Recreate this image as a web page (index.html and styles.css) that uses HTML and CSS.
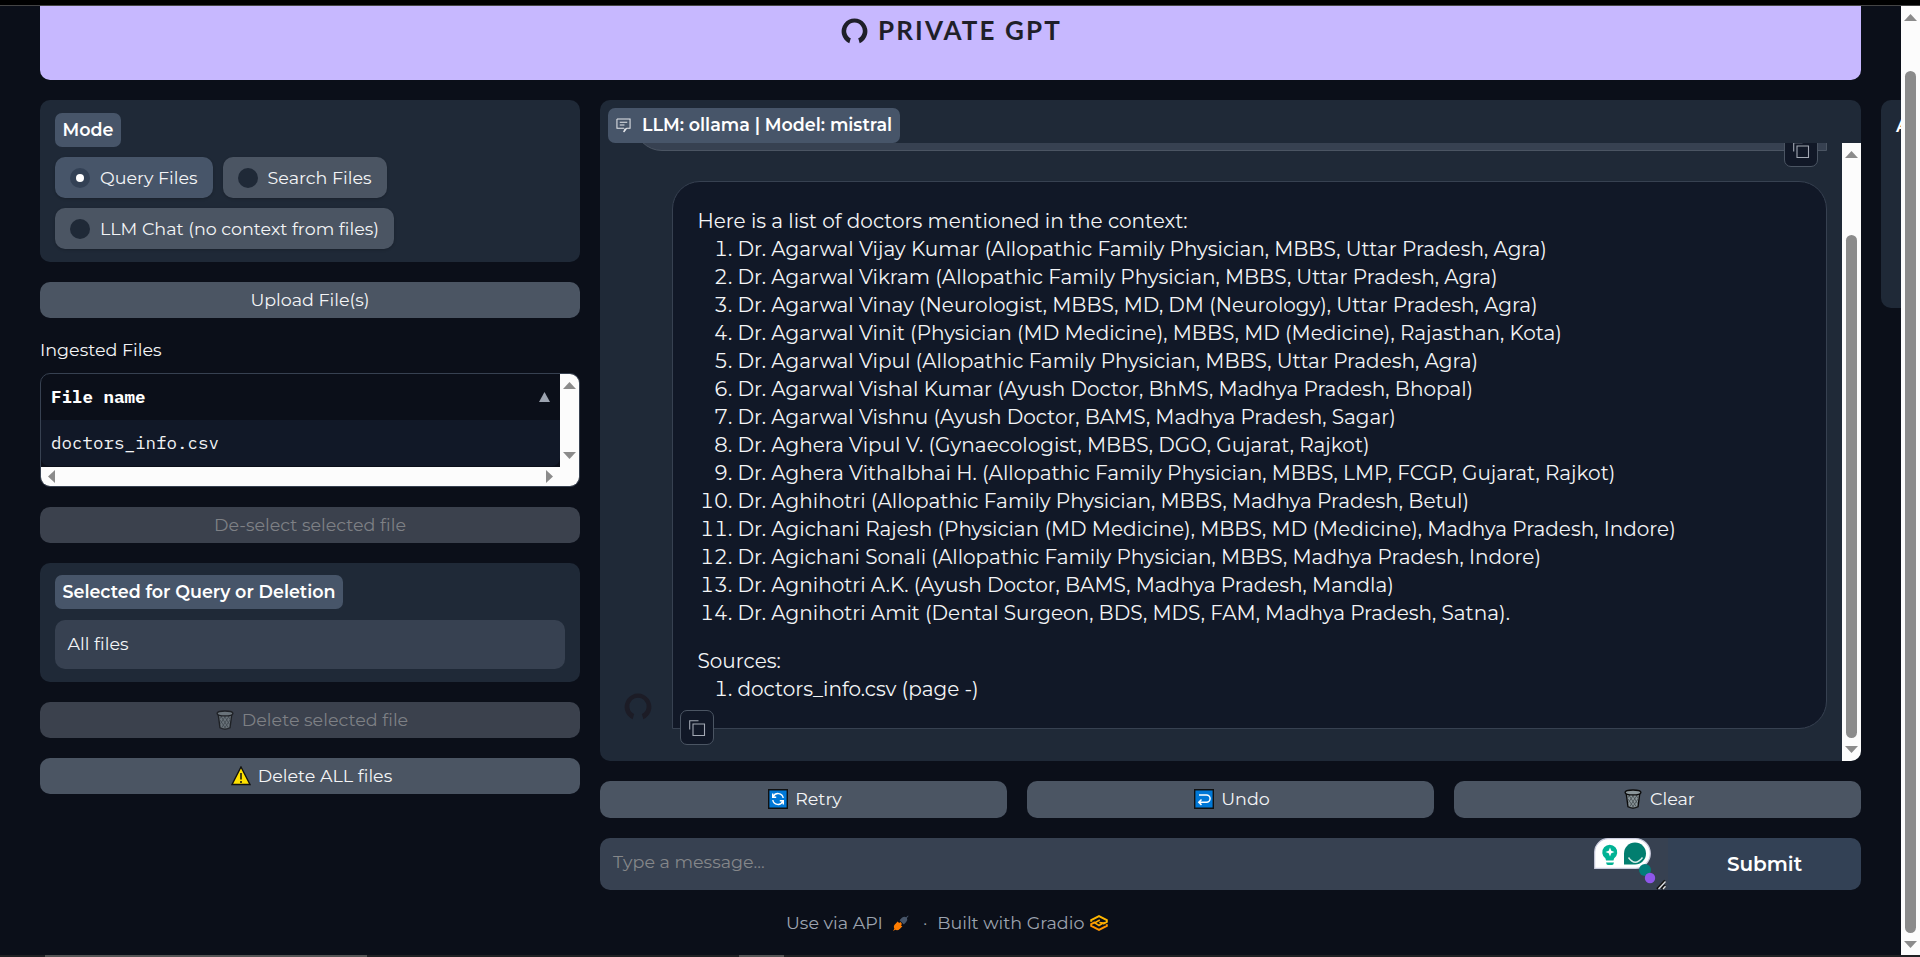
FILE: index.html
```html
<!DOCTYPE html>
<html lang="en">
<head>
<meta charset="utf-8">
<title>Private GPT</title>
<link rel="stylesheet" href="styles.css">
</head>
<body>
<svg class="defs" aria-hidden="true">
  <symbol id="horseshoe" viewBox="0 0 27 26"><path d="M8.3 25.2 A12.9 12.9 0 1 1 18.7 25.2 L17.2 20.3 A8.3 8.3 0 1 0 9.8 20.3 Z"/></symbol>
  <symbol id="copy" viewBox="0 0 18 19"><path d="M5 6h11.500v11.500H5zM1.700 11.500V2.700H10.500" fill="none" stroke="#a3a9b4" stroke-width="1.100"/></symbol>
  <symbol id="trash" viewBox="0 0 20 22">
    <path d="M2.500 4.500L4.500 19.500Q10 22.500 15.500 19.500L17.500 4.500Z" fill="#8a9599" stroke="#0c0c0c" stroke-width="1.500"/>
    <path d="M5 6l9 14M9 6l6 10M4.500 11l6 9M15 6L6 20M11 6l-6 9M15.500 11l-6 9M13 6l3 5M7 6l-3 4" stroke="#454d51" stroke-width=".9"/>
    <ellipse cx="10" cy="3.800" rx="8.700" ry="2.700" fill="#8a9599" stroke="#0c0c0c" stroke-width="1.500"/>
  </symbol>
</svg>
<div class="topbar"></div>
<div class="viewport">
  <div class="page">
    <header class="banner"><svg class="banner-icon"><use href="#horseshoe"/></svg><span class="brand">PRIVATE GPT</span></header>
    <div class="columns">
      <aside class="side">
        <section class="block mode">
          <div class="label">Mode</div>
          <div class="radios">
            <div class="radio on"><i class="dot"></i><span>Query Files</span></div>
            <div class="radio"><i class="dot"></i><span>Search Files</span></div>
            <div class="radio"><i class="dot"></i><span>LLM Chat (no context from files)</span></div>
          </div>
        </section>
        <div class="btn">Upload File(s)</div>
        <div class="caption">Ingested Files</div>
        <div class="table">
          <div class="rows">
            <div class="th"><span>File name</span><i class="sort"></i></div>
            <div class="td">doctors_info.csv</div>
          </div>
          <div class="vbar"><i class="tri up"></i><i class="tri down"></i></div>
          <div class="hbar"><i class="tri left"></i><i class="tri right"></i></div>
        </div>
        <div class="btn off">De-select selected file</div>
        <section class="block selected">
          <div class="label">Selected for Query or Deletion</div>
          <div class="field">All files</div>
        </section>
        <div class="btn with-emoji off"><svg class="emoji"><use href="#trash"/></svg>Delete selected file</div>
        <div class="btn with-emoji"><svg class="emoji" viewBox="0 0 20 20"><path d="M10 1L19 18.500H1Z" fill="#ffe100" stroke="#111" stroke-width="1.400"/><path d="M10 7v6.500M10 15v2" stroke="#111" stroke-width="1.500"/></svg>Delete ALL files</div>
      </aside>
      <main class="main">
        <section class="chat">
          <div class="chat-head"></div>
          <div class="chat-label"><svg class="chat-icon" viewBox="0 0 16 16"><path d="M1 1h14v10h-3.500l-3 4M1 1v10h5.500M4 4.500h8M4 7.500h5M6.500 11l2 0M8 15l2-4" fill="none" stroke="#e5e7eb" stroke-width="1.100"/></svg>LLM: ollama | Model: mistral</div>
          <div class="scroll">
            <div class="messages">
              <div class="user"><svg class="copy user-copy"><use href="#copy"/></svg></div>
              <div class="bot-row">
                <svg class="avatar"><use href="#horseshoe"/></svg>
                <div class="bot">
                  <p>Here is a list of doctors mentioned in the context:</p>
                  <ol>
                    <li>Dr. Agarwal Vijay Kumar (Allopathic Family Physician, MBBS, Uttar Pradesh, Agra)</li>
                    <li>Dr. Agarwal Vikram (Allopathic Family Physician, MBBS, Uttar Pradesh, Agra)</li>
                    <li>Dr. Agarwal Vinay (Neurologist, MBBS, MD, DM (Neurology), Uttar Pradesh, Agra)</li>
                    <li>Dr. Agarwal Vinit (Physician (MD Medicine), MBBS, MD (Medicine), Rajasthan, Kota)</li>
                    <li>Dr. Agarwal Vipul (Allopathic Family Physician, MBBS, Uttar Pradesh, Agra)</li>
                    <li>Dr. Agarwal Vishal Kumar (Ayush Doctor, BhMS, Madhya Pradesh, Bhopal)</li>
                    <li>Dr. Agarwal Vishnu (Ayush Doctor, BAMS, Madhya Pradesh, Sagar)</li>
                    <li>Dr. Aghera Vipul V. (Gynaecologist, MBBS, DGO, Gujarat, Rajkot)</li>
                    <li>Dr. Aghera Vithalbhai H. (Allopathic Family Physician, MBBS, LMP, FCGP, Gujarat, Rajkot)</li>
                    <li>Dr. Aghihotri (Allopathic Family Physician, MBBS, Madhya Pradesh, Betul)</li>
                    <li>Dr. Agichani Rajesh (Physician (MD Medicine), MBBS, MD (Medicine), Madhya Pradesh, Indore)</li>
                    <li>Dr. Agichani Sonali (Allopathic Family Physician, MBBS, Madhya Pradesh, Indore)</li>
                    <li>Dr. Agnihotri A.K. (Ayush Doctor, BAMS, Madhya Pradesh, Mandla)</li>
                    <li>Dr. Agnihotri Amit (Dental Surgeon, BDS, MDS, FAM, Madhya Pradesh, Satna).</li>
                  </ol>
                  <p class="sources">Sources:</p>
                  <ol><li>doctors_info.csv (page -)</li></ol>
                  <svg class="copy bot-copy"><use href="#copy"/></svg>
                </div>
              </div>
            </div>
            <div class="sbar chat-bar"><i class="tri up"></i><i class="thumb"></i><i class="tri down"></i></div>
          </div>
        </section>
        <div class="actions">
          <div class="btn with-emoji"><svg class="emoji" viewBox="0 0 20 20"><path d="M.7.700h18.600v18.600H.7z" fill="#0078d7" stroke="#111" stroke-width="1.400"/><path d="M5.200 7.600A5.300 5.300 0 0 1 15.200 9M14.800 12.400A5.300 5.300 0 0 1 4.800 11M4.700 4.500v3.700h3.500M15.300 15.500v-3.700h-3.500" fill="none" stroke="#fff" stroke-width="1.400"/></svg>Retry</div>
          <div class="btn with-emoji"><svg class="emoji" viewBox="0 0 20 20"><path d="M.7.700h18.600v18.600H.7z" fill="#0078d7" stroke="#111" stroke-width="1.400"/><path d="M5 6h7.500a3.600 3.600 0 0 1 0 7.200H5M7.500 10.500L4.800 13.200l2.700 2.700" fill="none" stroke="#fff" stroke-width="1.500"/></svg>Undo</div>
          <div class="btn with-emoji"><svg class="emoji"><use href="#trash"/></svg>Clear</div>
        </div>
        <div class="composer">
          <div class="input">Type a message...
            <svg class="assistant" viewBox="0 0 74 52">
              <path d="M.7 30.300V14A13.500 13.500 0 0 1 14 .700H41.500A14.800 14.800 0 0 1 41.500 30.300Z" fill="#fff" stroke="#c9cbdd" stroke-width="1.200"/>
              <path d="M11.500 20.500a7.500 7.500 0 1 1 8.500 0l-.5 2h-7.500zM12 24.500h8q-.5 2.500-2 2.500h-4q-1.500 0-2-2.500z" fill="#00b294"/>
              <path d="M16 9.500l1.300 3.200 3.200 1.300-3.200 1.300L16 18.500l-1.300-3.200-3.200-1.300 3.200-1.300z" fill="#fff"/>
              <path d="M30 26.500V15.500a11 11 0 1 1 11 11z" fill="#027e6f"/>
              <path d="M34.500 19.500q6.500 9.500 14 0" fill="none" stroke="#d6ece8" stroke-width="1.400"/>
              <circle cx="51" cy="32" r="6" fill="#027e7a"/><circle cx="56" cy="40" r="5.200" fill="#8e57ea"/>
              <path d="M63 51l8-8.500M67.500 51l3.500-4" stroke="#111" stroke-width="2"/><path d="M64.500 51l7-7.500M69 51l2.500-2.700" stroke="#ddd" stroke-width="1.300"/>
            </svg>
          </div>
          <div class="submit">Submit</div>
        </div>
      </main>
      <aside class="extra"><span>A</span></aside>
    </div>
    <footer class="footer">
      <span>Use via API</span>
      <svg class="plug" viewBox="0 0 18 18"><path d="M1 17l1.500-2.500Q1 11.500 3.500 9.500L6 7l1.500 1.500L9 7.500l1.500 2-1 1.500L11 12l-2.500 2.500Q6 17 3.500 15.700z" fill="#ff7c00"/><path d="M8 5.500L10.500 3Q13 1.200 15 2.500L17 .500l.500.500-1.700 2.200Q17 5.500 15 7.500L12.500 10z" fill="#475569"/></svg>
      <span class="sep">·</span>
      <span class="built">Built with Gradio</span>
      <svg class="gradio" viewBox="0 0 18 16"><path d="M1.200 6.800V5.200L9 1.200l7.800 4v1.600L13 8.800" fill="none" stroke="#ffb700" stroke-width="2"/><path d="M16.800 9.200v1.600L9 14.800l-7.800-4V9.200L5 7.200" fill="none" stroke="#ff9500" stroke-width="2"/><path d="M9.800 5L4.800 7.800 9 10.500l4.200-2.500L9.300 7.500" fill="none" stroke="#ffaa00" stroke-width="1.600"/></svg>
    </footer>
  </div>
  <div class="sbar page-bar"><i class="tri up"></i><i class="thumb"></i><i class="tri down"></i></div>
</div>
<div class="bottombar"><i></i><i></i></div>
</body>
</html>
```

FILE: styles.css
```css
* { box-sizing: border-box; }
body { margin: 0; width: 1920px; height: 957px; overflow: hidden; background: #0b0f19; color: #f3f4f6; font: 17.500px/26px Montserrat, Inter, sans-serif; display: flex; flex-direction: column; }
p, ol { margin: 0; }
.defs { position: absolute; width: 0; height: 0; }
.topbar { height: 6px; background: #000; border-bottom: 1px solid #444; flex: none; }
.bottombar { height: 2px; background: #202124; display: flex; gap: 372px; padding-left: 45px; flex: none; }
.bottombar i { width: 322px; background: #555; }
.bottombar i + i { width: 45px; }
.viewport { display: flex; height: 949px; }
.page { width: 1901px; padding-left: 40px; overflow: hidden; }
.banner { width: 1821px; height: 74px; background: #c7b8ff; border-radius: 0 0 10px 10px; display: flex; justify-content: center; align-items: flex-start; padding-top: 12px; gap: 10px; color: #1f1f29; }
.banner-icon { width: 27px; height: 26px; fill: #1f1f29; }
.brand { font: bold 26px/25px Lato, sans-serif; letter-spacing: 2.100px; margin-right: -2px; }
.columns { display: flex; gap: 20px; margin-top: 20px; height: 790px; width: 1880px; }
.side { width: 540px; display: flex; flex-direction: column; flex: none; }
.side > .btn, .side > .block, .side > .table { margin-bottom: 20px; flex: none; }
.block { background: #1f2937; border-radius: 10px; }
.mode { height: 162px; padding: 13px 15px; }
.label { display: inline-block; height: 34px; line-height: 34px; padding: 0 7.500px; background: #475569; border-radius: 7px; font-weight: 600; color: #fff; vertical-align: top; }
.radios { display: flex; flex-wrap: wrap; gap: 10px; margin-top: 10px; }
.radio { height: 41px; display: flex; align-items: center; gap: 10px; padding: 0 15px; background: #4b5563; border-radius: 10px; box-shadow: 0 1px 3px #0003; }
.on { background: #475569; }
.dot { width: 20px; height: 20px; border-radius: 50%; background: #1f2937; display: grid; place-items: center; }
.on .dot { background: #334155; }
.on .dot::after { content: ""; width: 8px; height: 8px; border-radius: 50%; background: #fff; }
.btn { height: 36px; border-radius: 10px; background: #4b5563; display: flex; align-items: center; justify-content: center; gap: 7px; }
.with-emoji { padding-left: 3px; }
.off { background: #3b414d; color: #7e8085; }
.off .emoji { opacity: .6; }
.emoji { width: 20px; height: 20px; }
.caption { height: 35px; line-height: 24px; }
.table { height: 114px; border: 1px solid #374151; border-radius: 10px; overflow: hidden; display: grid; grid-template: 93px 19px / 1fr 19px; background: #0b0f19; font: 17.500px/24px "IBM Plex Mono", "Liberation Mono", monospace; }
.th { height: 46px; padding: 0 10px; display: flex; align-items: center; justify-content: space-between; font-weight: bold; color: #fff; }
.td { height: 46px; line-height: 46px; padding: 0 10px; background: #111827; border-radius: 0 0 8px 8px; }
.sort { width: 11px; height: 10px; background: #9ca3af; clip-path: polygon(50% 0, 100% 100%, 0 100%); }
.vbar, .hbar, .sbar { background: #fcfcfc; display: flex; align-items: center; justify-content: space-between; }
.vbar { flex-direction: column; padding: 8px 0; }
.hbar { grid-column: 1 / 3; padding: 0 26px 0 7px; }
.tri { background: #8b8b8b; width: 13px; height: 7px; flex: none; }
.up { clip-path: polygon(50% 0, 100% 100%, 0 100%); }
.down { clip-path: polygon(0 0, 100% 0, 50% 100%); }
.left { width: 7px; height: 13px; clip-path: polygon(0 50%, 100% 0, 100% 100%); }
.right { width: 7px; height: 13px; clip-path: polygon(0 0, 100% 50%, 0 100%); }
.selected { height: 119px; padding: 12px 15px; }
.field { height: 49px; line-height: 48px; margin-top: 11px; padding: 0 12.500px; background: #374151; border-radius: 10px; }
.main { width: 1261px; flex: none; }
.chat { height: 661px; background: #1f2937; border-radius: 10px; overflow: hidden; position: relative; }
.chat-head { height: 43px; }
.chat-label { position: absolute; left: 8px; top: 8px; width: 292px; height: 35px; padding: 0 0 1px 8px; background: #475569; border-radius: 7px; color: #fff; font-weight: 600; display: flex; align-items: center; gap: 11px; white-space: nowrap; }
.chat-icon { width: 15px; height: 15px; }
.scroll { height: 618px; display: flex; overflow: hidden; }
.messages { width: 1242px; padding-right: 15px; }
.user { height: 8px; margin-left: 34px; position: relative; }
.user::before { content: ""; position: absolute; left: 0; right: 0; bottom: 0; height: 60px; background: #374151; border: 1px solid #4b5563; border-radius: 28px 28px 0 28px; clip-path: inset(52px 0 0 0); }
.copy { position: absolute; width: 34px; height: 35px; padding: 7px; background: #111827; border: 1px solid #4b5563; border-radius: 7px; }
.user-copy { right: 9px; top: -11px; clip-path: inset(11px 0 0 0); }
.bot-row { display: flex; align-items: flex-end; padding-left: 24px; gap: 20px; margin-top: 30px; }
.avatar { width: 28px; height: 27px; fill: #1c1c26; margin-bottom: 9px; }
.bot { width: 1155px; height: 548px; padding: 25px 24.500px; background: #111827; border: 1px solid #374151; border-radius: 28px 28px 28px 0; font-size: 20px; line-height: 28px; position: relative; }
.bot ol { padding-left: 40px; }
.sources { margin-top: 20px; }
.bot-copy { left: 7px; bottom: -17px; }
.sbar { width: 19px; flex: none; flex-direction: column; }
.chat-bar { padding: 8px 0; }
.thumb { width: 11px; background: #8b8b8b; border-radius: 6px; }
.chat-bar .thumb { height: 503px; margin-top: 69px; }
.page-bar { padding: 8px 0 7px; }
.page-bar .thumb { height: 862px; margin-top: 42px; }
.actions { display: grid; grid-template-columns: repeat(3, 1fr); gap: 20px; margin: 20px 0; }
.actions .btn { height: 37px; padding-bottom: 1px; }
.composer { height: 52px; display: flex; border-radius: 10px; overflow: hidden; }
.input { flex: 1; background: #374151; color: #85878a; line-height: 48px; padding-left: 13px; position: relative; }
.assistant { position: absolute; right: 0; top: 0; width: 74px; height: 52px; }
.submit { width: 193px; background: #334155; text-align: center; line-height: 52px; font-size: 20px; font-weight: 600; color: #fff; }
.extra { width: 40px; height: 208px; background: #1f2937; border-radius: 10px; padding: 13px 15px; font-weight: 600; color: #fff; flex: none; }
.footer { display: flex; align-items: center; margin: 20px 0 0 746px; color: #9ca3af; }
.plug { width: 17px; height: 17px; margin-left: 9px; }
.sep { margin: 0 10px 0 14px; }
.gradio { width: 18px; height: 16px; margin-left: 6px; }
```
